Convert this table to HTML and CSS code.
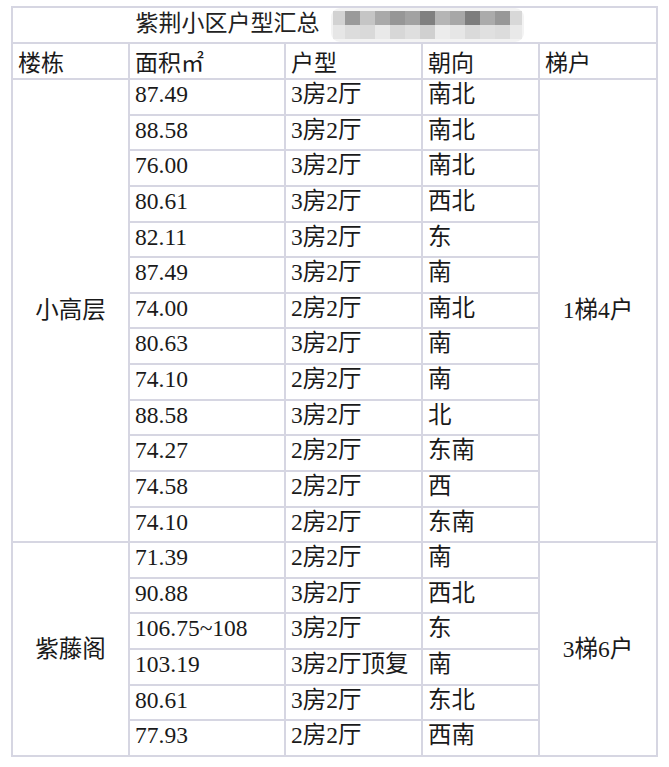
FILE: index.html
```html
<!DOCTYPE html>
<html>
<head>
<meta charset="utf-8">
<title>紫荆小区户型汇总</title>
<link rel="stylesheet" href="styles.css">
</head>
<body>
<table class="units">
  <colgroup>
    <col class="c1"><col class="c2"><col class="c3"><col class="c4"><col class="c5">
  </colgroup>
  <tr class="title-row">
    <td colspan="5" class="title">紫荆小区户型汇总<span class="mosaic"><i class="m1"></i><i class="m2"></i><i class="m3"></i><i class="m4"></i><i class="m5"></i><i class="m6"></i><i class="m7"></i><i class="m8"></i><i class="m9"></i><i class="m10"></i><i class="m11"></i><i class="m12"></i><i class="m13"></i><i class="n1"></i><i class="n2"></i><i class="n3"></i><i class="n4"></i><i class="n5"></i><i class="n6"></i><i class="n7"></i><i class="n8"></i><i class="n9"></i><i class="n10"></i><i class="n11"></i><i class="n12"></i><i class="n13"></i></span></td>
  </tr>
  <tr class="head-row">
    <td>楼栋</td><td>面积㎡</td><td>户型</td><td>朝向</td><td>梯户</td>
  </tr>
  <tr><td rowspan="13" class="group">小高层</td><td>87.49</td><td>3房2厅</td><td>南北</td><td rowspan="13" class="group">1梯4户</td></tr>
  <tr><td>88.58</td><td>3房2厅</td><td>南北</td></tr>
  <tr><td>76.00</td><td>3房2厅</td><td>南北</td></tr>
  <tr><td>80.61</td><td>3房2厅</td><td>西北</td></tr>
  <tr><td>82.11</td><td>3房2厅</td><td>东</td></tr>
  <tr><td>87.49</td><td>3房2厅</td><td>南</td></tr>
  <tr><td>74.00</td><td>2房2厅</td><td>南北</td></tr>
  <tr><td>80.63</td><td>3房2厅</td><td>南</td></tr>
  <tr><td>74.10</td><td>2房2厅</td><td>南</td></tr>
  <tr><td>88.58</td><td>3房2厅</td><td>北</td></tr>
  <tr><td>74.27</td><td>2房2厅</td><td>东南</td></tr>
  <tr><td>74.58</td><td>2房2厅</td><td>西</td></tr>
  <tr><td>74.10</td><td>2房2厅</td><td>东南</td></tr>
  <tr><td rowspan="6" class="group">紫藤阁</td><td>71.39</td><td>2房2厅</td><td>南</td><td rowspan="6" class="group">3梯6户</td></tr>
  <tr><td>90.88</td><td>3房2厅</td><td>西北</td></tr>
  <tr><td>106.75~108</td><td>3房2厅</td><td>东</td></tr>
  <tr><td>103.19</td><td>3房2厅顶复</td><td>南</td></tr>
  <tr><td>80.61</td><td>3房2厅</td><td>东北</td></tr>
  <tr><td>77.93</td><td>2房2厅</td><td>西南</td></tr>
</table>
</body>
</html>
```
FILE: styles.css
```css
html, body {
  margin: 0;
  padding: 0;
  background: #ffffff;
}

body {
  padding: 6px 0 0 11px;
}

.units {
  border-collapse: collapse;
  table-layout: fixed;
  width: 645px;
  font-family: "Liberation Serif", "Times New Roman", Times, "DejaVu Serif", "Noto Sans CJK SC", serif;
  font-size: 23.5px;
  color: #1a1a1a;
  border: 2px solid #dcdcdf;
}

.c1 { width: 117px; }
.c2 { width: 156px; }
.c3 { width: 137px; }
.c4 { width: 117px; }
.c5 { width: 118px; }

.units td {
  border: 2px solid #d6d6e2;
  padding: 1px 4px 0 5px;
  height: 35.63px;
  box-sizing: border-box;
  line-height: 27px;
  vertical-align: top;
  white-space: nowrap;
  overflow: hidden;
}

.units .title-row td {
  height: 35px;
  padding: 0;
  vertical-align: middle;
  text-align: center;
  font-family: "Noto Sans CJK SC", sans-serif;
  font-size: 23px;
  color: #222;
  overflow: visible;
}

.units .head-row td {
  height: 36px;
  vertical-align: middle;
  padding-top: 0;
  font-family: "Noto Sans CJK SC", sans-serif;
  font-size: 23px;
}

.units td.group {
  vertical-align: middle;
  text-align: center;
  padding: 0;
}

.mosaic {
  display: inline-grid;
  grid-template-columns: 12px repeat(11, 15px) 12px;
  grid-template-rows: 14px 14px;
  vertical-align: middle;
  margin-left: 11px;
  margin-right: 10px;
  padding: 3px 2px;
  background: #f3f3f3;
  border-radius: 9px;
  filter: blur(0.7px);
}

.mosaic i { display: block; }

.m1 { background: #d2d2d2; }
.m2 { background: #9a9a9a; }
.m3 { background: #c5c5c5; }
.m4 { background: #a9a9a9; }
.m5 { background: #969696; }
.m6 { background: #a2a2a2; }
.m7 { background: #808080; }
.m8 { background: #b5b5b5; }
.m9 { background: #a7a7a7; }
.m10 { background: #7d7d7d; }
.m11 { background: #ababab; }
.m12 { background: #989898; }
.m13 { background: #d8d8d8; }

.n1 { background: #e6e6e6; }
.n2 { background: #dcdcdc; }
.n3 { background: #d9d9d9; }
.n4 { background: #e9e9e9; }
.n5 { background: #d7d7d7; }
.n6 { background: #dfdfdf; }
.n7 { background: #d0d0d0; }
.n8 { background: #ececec; }
.n9 { background: #e6e6e6; }
.n10 { background: #dadada; }
.n11 { background: #e0e0e0; }
.n12 { background: #dcdcdc; }
.n13 { background: #e9e9e9; }
```
